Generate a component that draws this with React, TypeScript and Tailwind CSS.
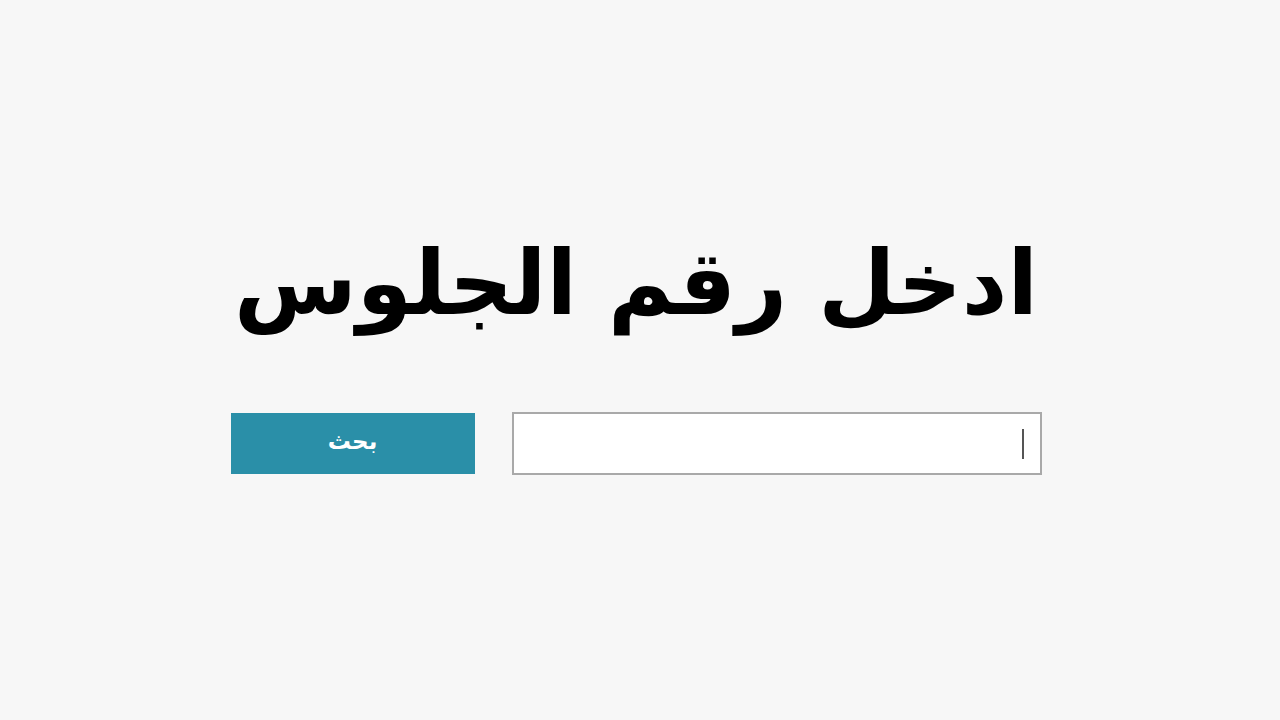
export default function App() {
  return (
    <div
      dir="rtl"
      className="flex h-[720px] w-[1280px] flex-col items-center bg-[#f7f7f7] pr-[8px] pt-[215px]"
      style={{ fontFamily: '"DejaVu Sans", "Noto Sans", sans-serif' }}
    >
      <h1 className="text-[89px] font-bold leading-[136px] text-black">ادخل رقم الجلوس</h1>
      <div className="mt-[61px] flex items-center gap-[37px]">
        <div className="flex h-[63px] w-[530px] items-center border-2 border-[#a9a9a9] bg-white px-[16px]">
          <span className="h-[30px] w-[2px] bg-[#555]" />
        </div>
        <button className="flex h-[61px] w-[244px] items-center justify-center bg-[#2a8fa8] pb-[4px] text-[23px] font-bold text-white">
          بحث
        </button>
      </div>
    </div>
  );
}
